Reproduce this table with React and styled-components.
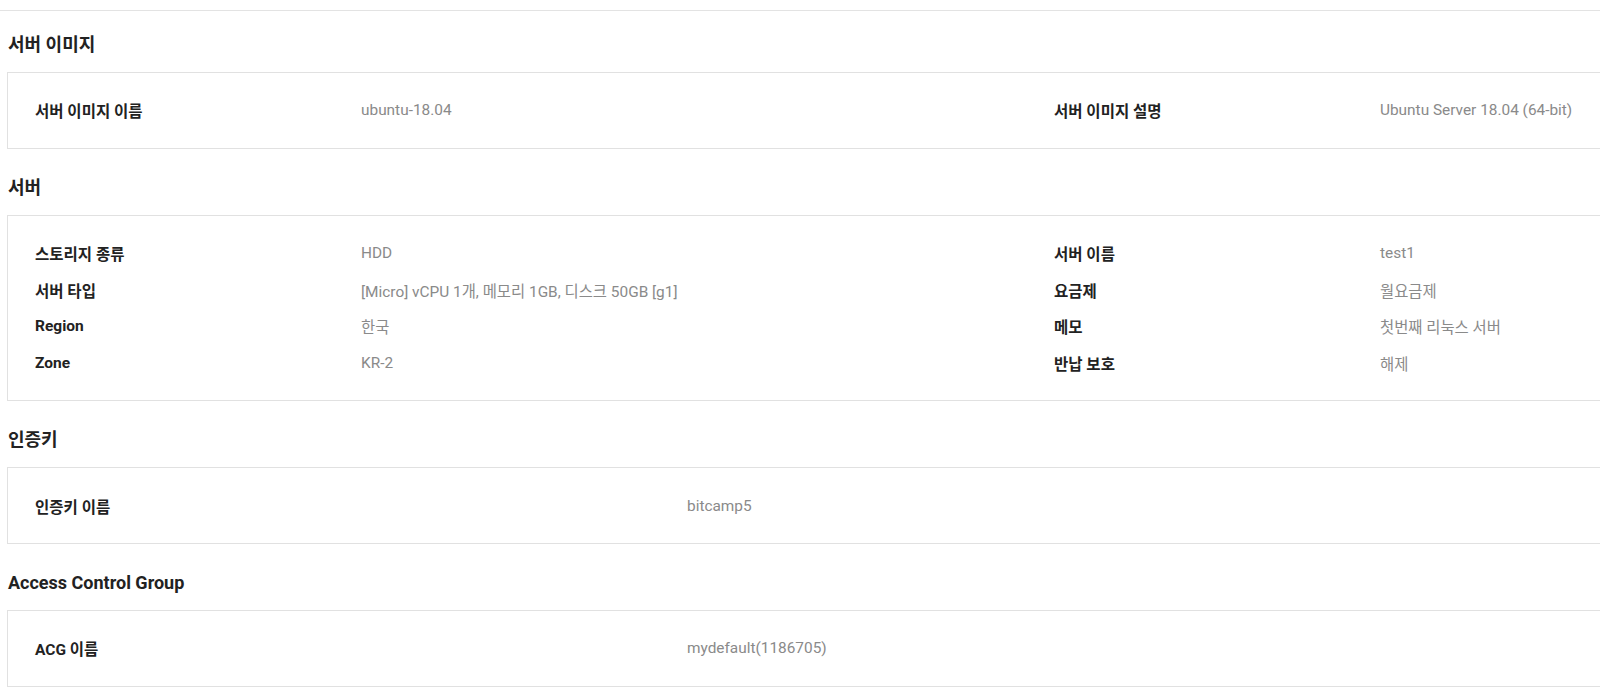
import React from "react";
import styled, { createGlobalStyle } from "styled-components";

const Global = createGlobalStyle`
  html, body {
    margin: 0;
    padding: 0;
    background: #fff;
    overflow: hidden;
  }
  body {
    font-family: Roboto, "Noto Sans CJK KR", sans-serif;
    color: #222;
  }
`;

const Page = styled.div`
  width: 1600px;
  height: 695px;
  overflow: hidden;
  background: #fff;
`;

const TopRule = styled.div`
  height: 10px;
  border-bottom: 1px solid #e3e3e3;
`;

const Body = styled.div`
  padding-left: 7px;
`;

const Heading = styled.h3`
  margin: ${(p) => (p.$first ? "23px" : "28px")} 0 16px 1px;
  height: 22px;
  line-height: 22px;
  font-size: 18px;
  font-weight: 700;
  color: #222;
  white-space: nowrap;
`;

const Panel = styled.div`
  width: 2100px;
  box-sizing: border-box;
  border: 1px solid #e1e1e1;
  padding: 19px 0 19px 27px;
  display: grid;
  grid-template-columns: ${(p) =>
    p.$cols === 2 ? "326px 693px 326px 1fr" : "652px 1fr"};
  grid-auto-rows: 36.7px;
  align-items: center;
`;

const Label = styled.div`
  font-size: 15.5px;
  font-weight: 700;
  color: #222;
  white-space: nowrap;
`;

const Value = styled.div`
  font-size: 15.4px;
  font-weight: 400;
  color: #8a8a8a;
  white-space: nowrap;
`;

const sections = [
  {
    title: "서버 이미지",
    cols: 2,
    items: [
      ["서버 이미지 이름", "ubuntu-18.04"],
      ["서버 이미지 설명", "Ubuntu Server 18.04 (64-bit)"],
    ],
  },
  {
    title: "서버",
    cols: 2,
    items: [
      ["스토리지 종류", "HDD"],
      ["서버 이름", "test1"],
      ["서버 타입", "[Micro] vCPU 1개, 메모리 1GB, 디스크 50GB [g1]"],
      ["요금제", "월요금제"],
      ["Region", "한국"],
      ["메모", "첫번째 리눅스 서버"],
      ["Zone", "KR-2"],
      ["반납 보호", "해제"],
    ],
  },
  {
    title: "인증키",
    cols: 1,
    items: [["인증키 이름", "bitcamp5"]],
  },
  {
    title: "Access Control Group",
    cols: 1,
    items: [["ACG 이름", "mydefault(1186705)"]],
  },
];

export default function App() {
  return (
    <Page>
      <Global />
      <TopRule />
      <Body>
        {sections.map((s, i) => (
          <section key={s.title}>
            <Heading $first={i === 0}>{s.title}</Heading>
            <Panel $cols={s.cols}>
              {s.items.map(([k, v]) => (
                <React.Fragment key={k}>
                  <Label>{k}</Label>
                  <Value>{v}</Value>
                </React.Fragment>
              ))}
            </Panel>
          </section>
        ))}
      </Body>
    </Page>
  );
}
